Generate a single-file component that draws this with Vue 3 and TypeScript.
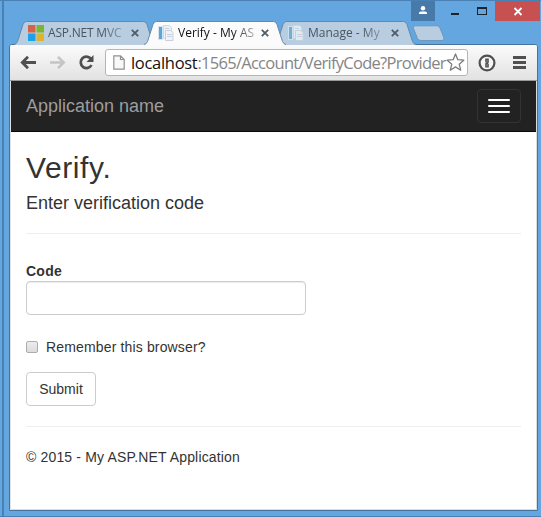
<script setup lang="ts">
import { ref } from 'vue'

interface Tab {
  title: string
  icon: 'microsoft' | 'document'
  active: boolean
}

const tabs: Tab[] = [
  { title: 'ASP.NET MVC', icon: 'microsoft', active: false },
  { title: 'Verify - My AS', icon: 'document', active: true },
  { title: 'Manage - My', icon: 'document', active: false },
]

const code = ref('')
const remember = ref(false)
</script>

<template>
  <div class="window">
    <div class="titlebar">
      <div class="user">
        <svg width="24" height="20" viewBox="0 0 24 20">
          <circle cx="12" cy="7.300" r="2.200" fill="#fff" />
          <path d="M8 13v-1q0-1.500 2-1.500h4q2 0 2 1.500v1z" fill="#fff" />
        </svg>
      </div>
      <svg class="minmax" width="60" height="20" viewBox="0 0 60 20">
        <path d="M16 12h8v2h-8z" fill="#1b242c" />
        <path d="M42 6h10v8H42zM43 8v5h8V8z" fill="#1b242c" fill-rule="evenodd" />
      </svg>
      <div class="close">
        <svg width="45" height="20" viewBox="0 0 45 20">
          <path d="M19.500 7l7 7M26.500 7l-7 7" stroke="#fff" stroke-width="1.800" />
        </svg>
      </div>
    </div>

    <div class="tabs">
      <div v-for="tab in tabs" :key="tab.title" class="tab" :class="[tab.icon, { active: tab.active }]">
        <svg class="shape" width="142" height="24" viewBox="0 0 142 24">
          <path class="fill" d="M0 24Q2.500 23 3.500 20.500L9 3.500Q10 .5 12.500 .5H129.500Q132 .5 133 3.500L138.500 20.500Q139.500 23 142 24z" />
          <path class="line" d="M0 23.500Q2.500 23 3.500 20.500L9 3.500Q10 .5 12.500 .5H129.500Q132 .5 133 3.500L138.500 20.500Q139.500 23 142 23.500" />
        </svg>
        <svg v-if="tab.icon === 'microsoft'" class="favicon" width="16" height="16" viewBox="0 0 16 16">
          <path fill="#d96148" d="M0 0h7.500v7.500H0z" />
          <path fill="#7cb62f" d="M8.500 0H16v7.500H8.500z" />
          <path fill="#1ba1e8" d="M0 8.500h7.500V16H0z" />
          <path fill="#e0b32c" d="M8.500 8.500H16V16H8.500z" />
        </svg>
        <svg v-else class="favicon" width="16" height="16" viewBox="0 0 16 16">
          <path fill="#d8e5f0" d="M0 1h5v14H0z" />
          <path fill="#5aa5da" d="M1 2h3v12H1z" />
          <path fill="#edf1f6" stroke="#d0d9e3" d="M5.500.5h6l2 2v11h-8z" />
          <path fill="#f0f3f7" stroke="#c8d1dd" d="M7.500 5.500h5.500l2 2v8H7.500z" />
          <path stroke="#c9d3df" d="M7 3.500h4M9 9.500h5M9 11.500h5" />
        </svg>
        <span class="title">{{ tab.title }}</span>
        <svg class="x" width="8" height="8" viewBox="0 0 8 8">
          <path d="M.8 .8l6.400 6.400M7.200 .8L.8 7.200" stroke-width="1.800" />
        </svg>
      </div>
      <svg class="newtab" width="32" height="17" viewBox="0 0 32 17">
        <path d="M2 .8H24Q26 .8 27 3L31 13Q31.500 15.500 29 15.500H8Q5.500 15.500 4.500 13.500L.5 3.500Q-.2 .8 2 .8z" fill="#b8cde0" stroke="#6c98bf" />
      </svg>
    </div>

    <div class="frame">
      <div class="toolbar">
        <svg class="nav-icons" width="85" height="35" viewBox="0 0 85 35">
          <path d="M26 17.500H13M18 11.800l-5.700 5.700 5.700 5.700" fill="none" stroke="#505050" stroke-width="2.800" />
          <path d="M40 17.500h13M48 11.800l5.700 5.700-5.700 5.700" fill="none" stroke="#c4c4c4" stroke-width="2.600" />
          <path d="M80.800 13.700A5.700 5.700 0 1 0 81.500 20" fill="none" stroke="#505050" stroke-width="2.700" />
          <path d="M83.500 10v7h-7z" fill="#505050" />
        </svg>
        <div class="address">
          <svg class="doc" width="12" height="15" viewBox="0 0 12 15">
            <path d="M.8.8h6.700l3.700 3.700v9.700H.8zM7.500.8v3.700h3.700" fill="#f8f8f8" stroke="#909090" stroke-width="1.200" />
          </svg>
          <span class="url"><b>localhost</b>:1565/Account/VerifyCode?Provider</span>
          <svg class="star" width="19" height="19" viewBox="0 0 19 19">
            <path d="M9.500 1l2.300 5.700 6 .5-4.600 4 1.500 6-5.200-3.300-5.200 3.300 1.500-6-4.600-4 6-.5z" fill="#fff" stroke="#7c7c7c" stroke-width="1.300" stroke-linejoin="round" />
          </svg>
        </div>
        <svg class="ext" width="18" height="18" viewBox="0 0 18 18">
          <circle cx="9" cy="9" r="7.400" fill="#f6f6f6" stroke="#505050" stroke-width="2.200" />
          <path d="M7.200 4.500h3.600v4l-.8.700.8.800v3.500H7.200v-4l.8-.7-.8-.8z" fill="#505050" />
          <path d="M9 6v2.500M9 10v2.500" stroke="#bbb" stroke-width=".6" />
        </svg>
        <svg class="menu" width="13" height="13" viewBox="0 0 13 13">
          <path d="M0 1.500h13M0 6.500h13M0 11.500h13" stroke="#505050" stroke-width="2.800" />
        </svg>
      </div>

      <header class="navbar">
        <span>Application name</span>
        <button class="toggle" type="button" aria-label="Menu"><i /><i /><i /></button>
      </header>

      <main class="page">
        <h2>Verify.</h2>
        <h4>Enter verification code</h4>
        <hr />
        <form @submit.prevent>
          <label class="label" for="code">Code</label>
          <input id="code" v-model="code" class="field" type="text" />
          <label class="remember">
            <input v-model="remember" type="checkbox" />
            <span>Remember this browser?</span>
          </label>
          <button class="submit" type="submit">Submit</button>
        </form>
        <hr />
        <footer>© 2015 - My ASP.NET Application</footer>
      </main>
    </div>
  </div>
</template>

<style>
body {
  margin: 0;
  overflow: hidden;
}
</style>

<style scoped>
* {
  box-sizing: border-box;
}
svg {
  display: block;
  flex: none;
}
.window {
  width: 541px;
  height: 517px;
  display: flex;
  flex-direction: column;
  background: linear-gradient(90deg, #64a6df 2px, #4a80b3 2px, #4a80b3 4px, #64a6df 4px);
  border-top: 1px solid #4a80b3;
  border-bottom: 1px solid #4a80b3;
}
.titlebar {
  height: 20px;
  display: flex;
  justify-content: flex-end;
  padding-right: 1px;
}
.user {
  width: 24px;
  background: #477aa8;
}
.close {
  width: 45px;
  background: #c75050;
}
.tabs {
  height: 23px;
  display: flex;
  padding-left: 14px;
}
.tab {
  width: 142px;
  height: 24px;
  margin-right: -12px;
  position: relative;
  display: flex;
  align-items: center;
  flex: none;
  padding-left: 14px;
}
.tab.active {
  z-index: 2;
}
.shape {
  position: absolute;
  left: 0;
  top: 0;
}
.fill {
  fill: #b9cde0;
}
.line {
  fill: none;
  stroke: #6589aa;
}
.active .fill {
  fill: #fbfbfb;
}
.favicon,
.title,
.x {
  position: relative;
}
.document:not(.active) .favicon {
  opacity: 0.75;
}
.title {
  width: 79px;
  margin-left: 4px;
  white-space: nowrap;
  font: 12px/16px 'Open Sans', sans-serif;
  color: #4a5560;
  mask-image: linear-gradient(90deg, #000 54px, rgba(0, 0, 0, 0.3) 77px);
}
.microsoft .title {
  letter-spacing: -0.2px;
}
.active .title {
  color: #111;
}
.x {
  margin-left: 4px;
  stroke: #4f5b66;
}
.newtab {
  margin: 4px 0 0 9px;
}
.frame {
  width: 529px;
  height: 467px;
  margin-left: 9px;
  display: flex;
  flex-direction: column;
  border: 1px solid #45759f;
  border-radius: 3px 3px 0 0;
  background: #fff;
  overflow: hidden;
  box-shadow: inset 1px 0 #e2e2e2, inset -1px -1px #dcdcdc;
}
.toolbar {
  height: 36px;
  flex: none;
  display: flex;
  align-items: center;
  background: linear-gradient(#fbfbfb, #e2e2e2);
  border-bottom: 1px solid #969a98;
}
.nav-icons {
  margin-right: 10px;
}
.address {
  width: 363px;
  height: 27px;
  display: flex;
  align-items: center;
  background: #fff;
  border: 1px solid #b5b5b5;
  border-radius: 3px;
  padding-left: 7px;
}
.url {
  width: 316px;
  margin-left: 6px;
  font: 16.5px/24px 'Open Sans', sans-serif;
  letter-spacing: -0.72px;
  white-space: nowrap;
  color: #858585;
}
.url b {
  font-weight: 400;
  letter-spacing: -0.3px;
  color: #111;
}
.star {
  margin-left: -1px;
}
.ext {
  margin-left: 10px;
}
.menu {
  margin-left: 17px;
}
.navbar {
  height: 51px;
  flex: none;
  margin: 0 1px;
  padding: 0 15px;
  display: flex;
  align-items: center;
  justify-content: space-between;
  background: #222;
  border-bottom: 1px solid #080808;
  color: #9d9d9d;
  font: 18px/20px 'Liberation Sans', Arial, sans-serif;
}
.toggle {
  width: 44px;
  height: 34px;
  padding: 0;
  display: flex;
  flex-direction: column;
  align-items: center;
  justify-content: center;
  gap: 4px;
  background: transparent;
  border: 1px solid #333;
  border-radius: 4px;
}
.toggle i {
  width: 22px;
  height: 2px;
  border-radius: 1px;
  background: #fff;
}
.page {
  padding: 18px 16px 0;
  color: #333;
  font: 14px/20px 'Liberation Sans', Arial, sans-serif;
}
h2 {
  margin: 0;
  font-size: 30px;
  line-height: 35px;
  font-weight: 400;
  letter-spacing: 0.6px;
}
h4 {
  margin: 8px 0 0;
  font-size: 18px;
  line-height: 20px;
  font-weight: 400;
}
hr {
  margin: 20px 0 0;
  border: 0;
  border-top: 1px solid #eee;
}
form {
  display: flex;
  flex-direction: column;
  align-items: flex-start;
  padding-top: 27px;
}
.label {
  font-weight: 700;
  letter-spacing: 0.25px;
}
.field {
  width: 280px;
  height: 34px;
  border: 1px solid #ccc;
  border-radius: 4px;
  box-shadow: inset 0 1px 1px rgba(0, 0, 0, 0.075);
  outline: 0;
}
.remember {
  display: flex;
  align-items: center;
  gap: 8px;
  margin-top: 22px;
  letter-spacing: 0.15px;
}
.remember input {
  appearance: none;
  width: 12px;
  height: 12px;
  margin: 0;
  border: 1px solid #adadad;
  border-radius: 2px;
  background: linear-gradient(#ececec, #dcdcdc);
}
.submit {
  width: 70px;
  height: 34px;
  margin-top: 15px;
  padding: 0;
  border: 1px solid #ccc;
  border-radius: 4px;
  background: #fff;
  color: #333;
  font: inherit;
}
footer {
  margin-top: 20px;
  letter-spacing: 0.16px;
}
</style>
